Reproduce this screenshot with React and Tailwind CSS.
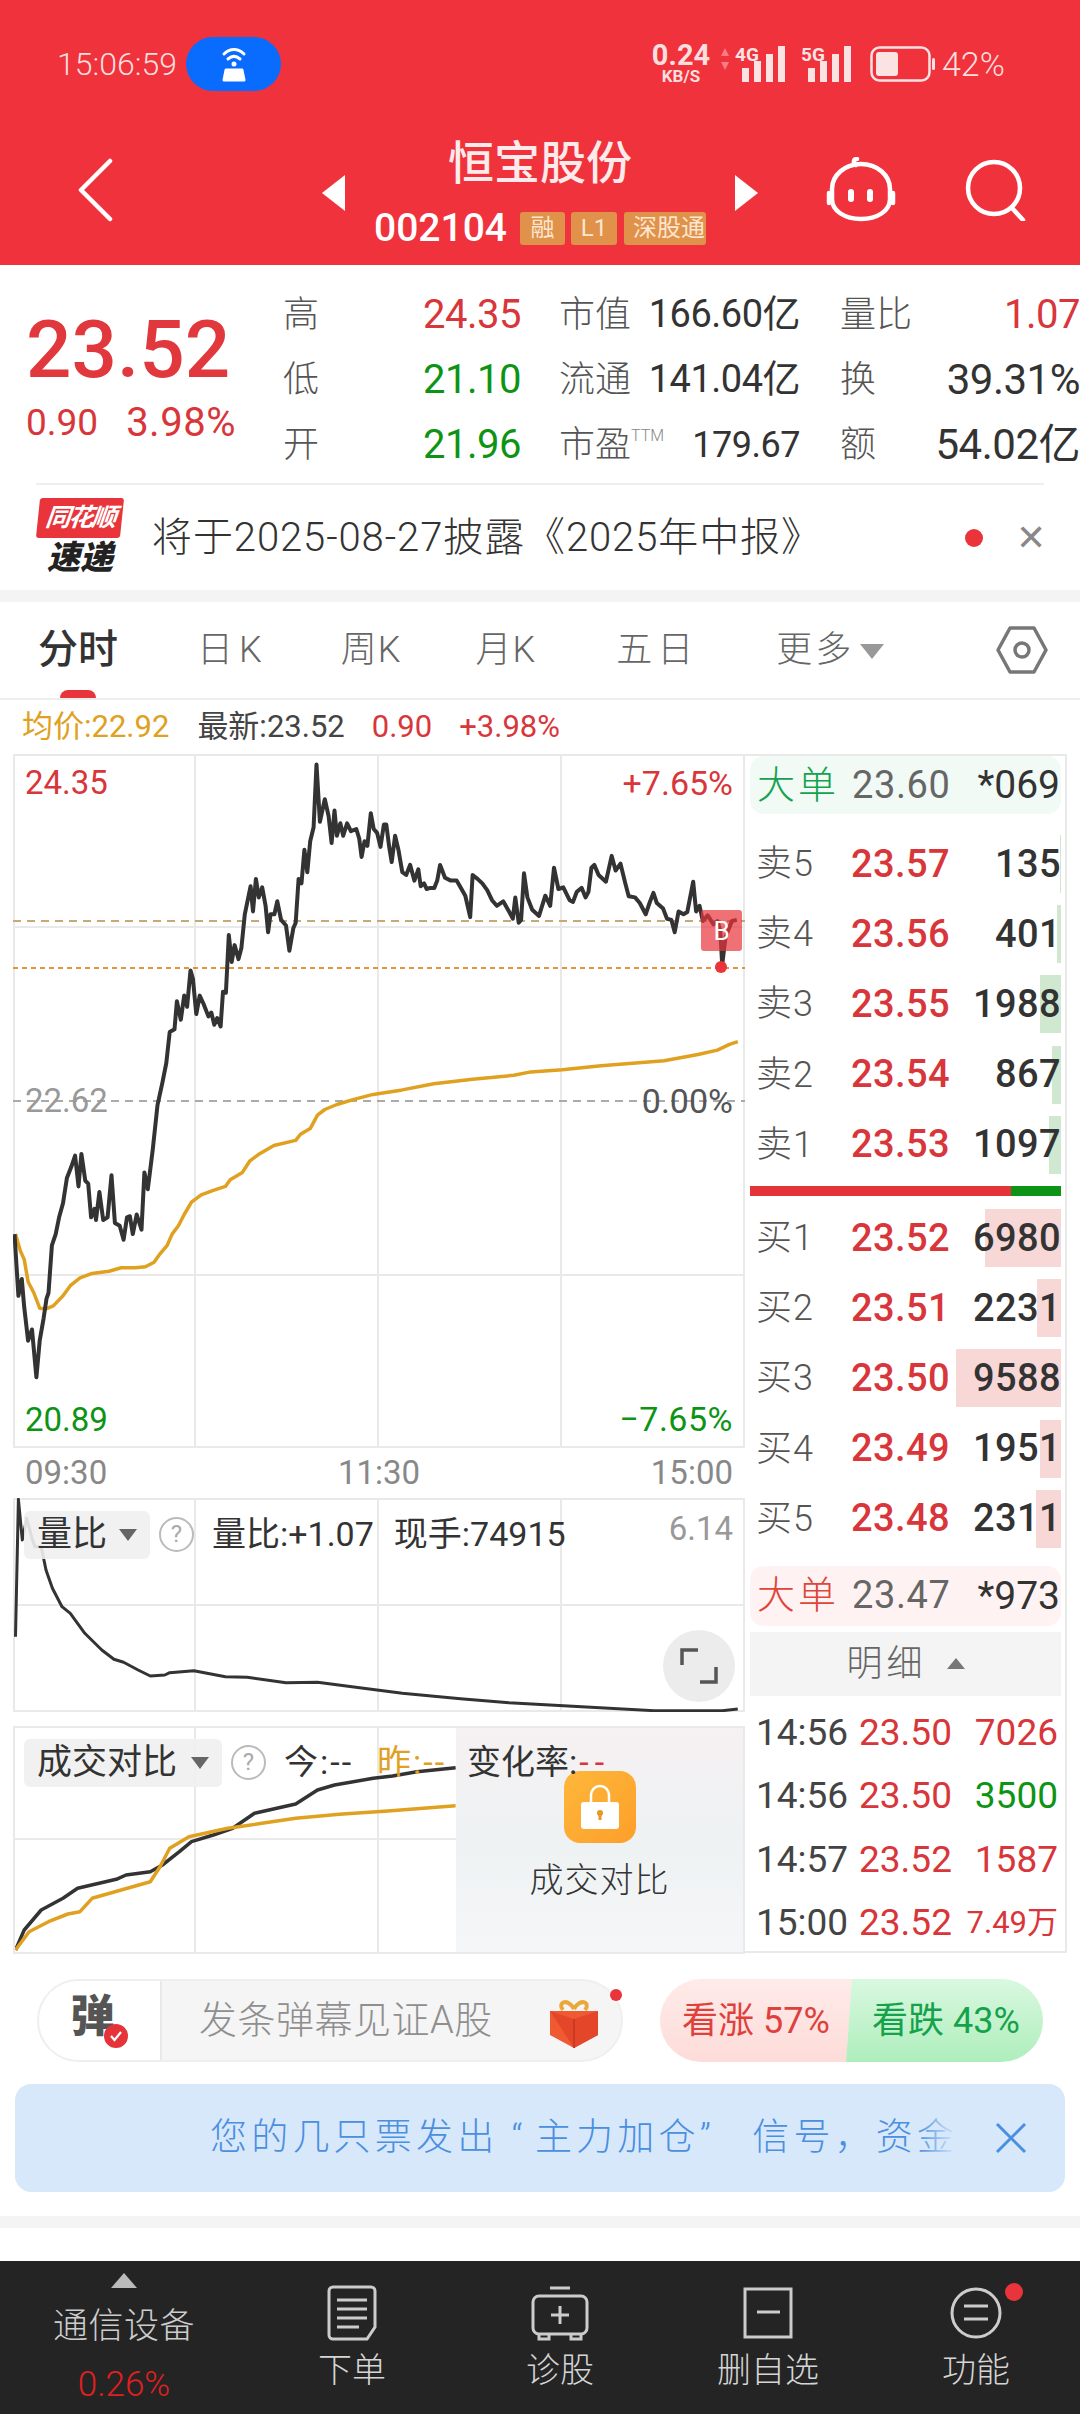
const RED = 'text-[#d8363a]';

const toPath = (pts, sx, sy, ox, oy) =>
  pts.map(([x, y], i) => `${i ? 'L' : 'M'}${(x / sx - ox).toFixed(1)} ${(y / sy + oy).toFixed(1)}`).join(' ');

// traced from the reference
const PRICE = [[30,1130],[38,1240],[45,1210],[50,1260],[58,1320],[66,1300],[75,1385],[82,1320],[90,1280],[96,1245],[100,1235],[107,1150],[115,1130],[122,1100],[130,1075],[138,1030],[147,1010],[155,990],[162,1045],[168,987],[176,1035],[182,1040],[188,1100],[195,1085],[198,1105],[205,1055],[213,1105],[222,1100],[230,1025],[237,1110],[247,1115],[255,1140],[262,1100],[268,1098],[274,1130],[282,1095],[292,1122],[298,1020],[305,1050],[315,980],[325,900],[335,860],[343,825],[350,770],[360,765],[365,715],[373,748],[380,705],[386,725],[393,660],[398,675],[405,738],[412,705],[420,720],[430,742],[436,735],[442,757],[448,745],[455,760],[460,698],[466,700],[472,597],[478,645],[484,615],[492,640],[498,620],[505,560],[517,510],[522,555],[528,497],[534,530],[541,512],[548,545],[553,592],[558,560],[566,560],[572,537],[580,570],[590,580],[597,625],[605,585],[610,575],[616,497],[622,505],[628,445],[634,485],[640,430],[647,405],[653,293],[660,395],[670,355],[678,385],[684,433],[690,375],[695,420],[702,398],[708,420],[716,398],[724,412],[735,408],[741,425],[746,458],[752,430],[758,438],[765,380],[771,408],[778,415],[785,440],[792,400],[797,400],[803,440],[808,467],[815,420],[822,445],[830,485],[838,490],[846,472],[855,500],[863,480],[868,510],[875,505],[880,515],[888,513],[896,513],[902,500],[908,472],[918,495],[930,500],[942,500],[950,512],[960,527],[970,565],[975,490],[985,497],[995,505],[1005,517],[1015,535],[1025,545],[1038,537],[1050,555],[1058,568],[1063,530],[1070,575],[1075,570],[1081,487],[1088,530],[1098,552],[1112,563],[1125,527],[1135,545],[1143,477],[1152,515],[1162,512],[1175,535],[1182,538],[1190,520],[1200,513],[1208,530],[1214,520],[1220,477],[1226,472],[1235,490],[1250,502],[1262,456],[1270,482],[1280,470],[1290,505],[1297,528],[1310,530],[1320,540],[1332,560],[1340,540],[1348,522],[1355,540],[1368,550],[1376,568],[1385,570],[1392,592],[1400,555],[1410,560],[1418,556],[1430,502],[1436,555],[1443,545],[1450,572],[1460,562],[1472,578],[1480,572],[1486,590],[1490,650],[1497,600],[1510,572],[1520,570]];
const AVG = [[32,1130],[42,1160],[50,1175],[58,1215],[70,1235],[82,1262],[95,1263],[110,1258],[130,1240],[145,1222],[165,1208],[190,1200],[225,1196],[250,1190],[280,1190],[300,1188],[318,1180],[330,1165],[345,1150],[355,1130],[368,1115],[380,1095],[395,1073],[415,1060],[440,1052],[465,1045],[475,1033],[500,1020],[515,1000],[535,987],[565,972],[610,963],[620,952],[640,942],[655,918],[670,908],[695,899],[730,890],[770,881],[830,873],[895,862],[975,854],[1060,847],[1095,841],[1160,837],[1240,830],[1370,821],[1440,810],[1480,802],[1505,792],[1522,787]];
const RATIO = [[32,500],[38,88],[46,210],[55,145],[65,200],[72,230],[85,230],[95,300],[108,355],[128,410],[145,430],[175,490],[210,540],[235,568],[255,577],[285,600],[310,618],[340,615],[350,608],[400,602],[465,620],[510,622],[590,638],[655,637],[750,655],[830,670],[950,686],[1050,698],[1200,710],[1350,722],[1490,722],[1522,717]];
const TODAY = [[32,1440],[50,1380],[85,1320],[130,1285],[160,1255],[240,1228],[260,1215],[310,1205],[335,1185],[370,1145],[395,1115],[440,1095],[480,1075],[525,1030],[610,1002],[655,960],[690,945],[770,925],[810,918],[860,905],[940,893]];
const YDAY = [[32,1440],[60,1385],[100,1355],[140,1332],[165,1325],[190,1285],[250,1260],[310,1235],[330,1190],[350,1135],[390,1100],[470,1075],[540,1060],[610,1045],[700,1033],[800,1023],[940,1007]];

const SELLS = [['卖5', '23.57', '135', 1], ['卖4', '23.56', '401', 4], ['卖3', '23.55', '1988', 21], ['卖2', '23.54', '867', 9], ['卖1', '23.53', '1097', 12]];
const BUYS = [['买1', '23.52', '6980', 76], ['买2', '23.51', '2231', 24], ['买3', '23.50', '9588', 105], ['买4', '23.49', '1951', 21], ['买5', '23.48', '2311', 25]];
const TICKS = [['14:56', '23.50', '7026', RED], ['14:56', '23.50', '3500', 'text-[#0d9414]'], ['14:57', '23.52', '1587', RED], ['15:00', '23.52', '7.49万', RED]];

function Signal({ label }) {
  return (
    <div className="flex items-end h-[36px] w-[51px] relative">
      <span className="absolute left-0 top-[-1px] text-[19px] leading-[19px] font-bold text-[#fbe3e3]">{label}</span>
      <div className="ml-[7px] w-[7px] h-[14px] bg-[#fbe3e3]" />
      <div className="ml-[5px] w-[7px] h-[21px] bg-[#fbe3e3]" />
      <div className="ml-[5px] w-[7px] h-[28px] bg-[#fbe3e3]" />
      <div className="ml-[5px] w-[7px] h-[36px] bg-[#fbe3e3]" />
    </div>
  );
}

function StatusBar() {
  return (
    <div className="flex items-center h-[54px] pl-[57px] text-[#fbdede]">
      <span className="text-[32px] font-light w-[129px] whitespace-nowrap">15:06:59</span>
      <div className="w-[95px] h-[54px] rounded-full bg-[#0a6cff] flex items-center justify-center">
        <svg width="44" height="44" viewBox="0 0 44 44" fill="none" stroke="#fff" strokeWidth="3" strokeLinecap="round">
          <path d="M12 12c6-6 14-6 20 0M16 17c4-3.5 8-3.5 12 0" />
          <circle cx="22" cy="22" r="2.5" fill="#fff" stroke="none" />
          <path d="M12 38l2-10h16l2 10z" fill="#fff" stroke="#fff" strokeLinejoin="round" />
        </svg>
      </div>
      <div className="ml-[371px] w-[58px] flex flex-col items-center">
        <span className="text-[29px] leading-[23px] font-bold">0.24</span>
        <span className="text-[17px] leading-[17px] font-bold mt-[1px]">KB/S</span>
      </div>
      <svg width="10" height="26" viewBox="0 0 10 26" className="ml-[10px] mb-[10px]">
        <path d="M5 2l4 8H1zM5 24l-4-8h8z" fill="#f87d82" />
      </svg>
      <div className="ml-[5px]"><Signal label="4G" /></div>
      <div className="ml-[15px]"><Signal label="5G" /></div>
      <svg width="66" height="36" viewBox="0 0 66 36" fill="none" className="ml-[18px]">
        <rect x="1.5" y="1.5" width="58" height="33" rx="8" stroke="#fbe3e3" strokeWidth="2.5" />
        <rect x="6" y="6" width="22" height="24" rx="3" fill="#fbe3e3" />
        <rect x="62" y="12" width="3" height="12" rx="1.5" fill="#fbe3e3" />
      </svg>
      <span className="ml-[6px] text-[34px] font-light">42%</span>
    </div>
  );
}

function Header() {
  return (
    <div className="h-[265px] shrink-0 bg-[#f0323c] pt-[37px] text-white">
      <StatusBar />
      <div className="flex items-center mt-[47px] pl-[77px]">
        <svg width="36" height="64" viewBox="0 0 36 64" fill="none" stroke="#fff" strokeWidth="4.5" strokeLinecap="round" strokeLinejoin="round" className="mt-[-6px]">
          <path d="M33 3L4 32l29 29" />
        </svg>
        <div className="ml-[209px] w-[436px] flex items-center justify-between">
          <div className="w-0 h-0 border-y-[18px] border-y-transparent border-r-[23px] border-r-white" />
          <div className="flex flex-col items-center">
            <div className="text-[46px] leading-[50px] font-medium text-[#fdeaea]">恒宝股份</div>
            <div className="flex items-center mt-[20px] h-[40px]">
              <span className="text-[39px] font-medium mr-[13px]">002104</span>
              <span className="w-[45px] h-[33px] bg-[#e0914a] rounded-[3px] text-[#fbe6cf] text-[24px] leading-[33px] text-center">融</span>
              <span className="ml-[6px] w-[46px] h-[33px] bg-[#e0914a] rounded-[3px] text-[#fbe6cf] text-[24px] leading-[33px] text-center">L1</span>
              <span className="ml-[7px] w-[82px] h-[33px] bg-[#e0914a] rounded-[3px] text-[#fbe6cf] text-[24px] leading-[33px] pl-[9px] overflow-hidden whitespace-nowrap">深股通</span>
            </div>
          </div>
          <div className="w-0 h-0 border-y-[18px] border-y-transparent border-l-[23px] border-l-white" />
        </div>
        <svg width="70" height="66" viewBox="0 0 70 66" fill="none" stroke="#fff" strokeWidth="4.5" className="ml-[68px] mt-[-6px]">
          <path d="M30 8c-3-1-3-6 1-6M6 32a29 25 0 0 1 58 0v10c0 12-13 20-29 20S6 54 6 42z" strokeLinecap="round" />
          <path d="M3 36v10M67 36v10" strokeLinecap="round" />
          <rect x="22" y="32" width="6" height="13" rx="3" fill="#fff" stroke="none" />
          <rect x="41" y="32" width="6" height="13" rx="3" fill="#fff" stroke="none" />
        </svg>
        <svg width="62" height="62" viewBox="0 0 62 62" fill="none" stroke="#fff" strokeWidth="4.5" strokeLinecap="round" className="ml-[69px] mt-[-6px]">
          <circle cx="29" cy="29" r="26" />
          <path d="M47 49l11 12" />
        </svg>
      </div>
    </div>
  );
}

function Stat({ label, value, tone = 'text-[#333]', size = 'text-[38px]' }) {
  return (
    <div className="flex items-center justify-between h-[65px]">
      <span className="text-[36px] font-light text-[#555] whitespace-nowrap">{label}</span>
      <span className={`tracking-[-0.5px] whitespace-nowrap ${size} ${tone}`}>{value}</span>
    </div>
  );
}

function Quote() {
  const green = 'text-[#0d9414]';
  return (
    <div className="h-[218px] shrink-0 flex pt-[17px] overflow-hidden">
      <div className="w-[283px] shrink-0 pl-[26px]">
        <div className="text-[80px] leading-[92px] font-medium text-[#e0383c] mt-[22px]">23.52</div>
        <div className="flex text-[37px] leading-[44px] text-[#d8363a] mt-[5px] whitespace-nowrap">
          <span>0.90</span>
          <span className="ml-[28px] text-[40px] tracking-[0.5px]">3.98%</span>
        </div>
      </div>
      <div className="w-[238px] shrink-0">
        <Stat label="高" value="24.35" tone={RED} size="text-[40px]" />
        <Stat label="低" value="21.10" tone={green} size="text-[40px]" />
        <Stat label="开" value="21.96" tone={green} size="text-[40px]" />
      </div>
      <div className="w-[241px] shrink-0 ml-[38px]">
        <Stat label="市值" value="166.60亿" />
        <Stat label="流通" value="141.04亿" />
        <div className="flex items-center justify-between h-[65px]">
          <span className="text-[36px] font-light text-[#555] flex items-start whitespace-nowrap">市盈<span className="text-[16px] leading-[26px] mt-[5px] text-[#888]">TTM</span></span>
          <span className="text-[36px] tracking-[-0.5px] text-[#333]">179.67</span>
        </div>
      </div>
      <div className="w-[240px] shrink-0 ml-[40px]">
        <Stat label="量比" value="1.07" tone={RED} size="text-[40px]" />
        <Stat label="换" value="39.31%" size="text-[42px]" />
        <Stat label="额" value="54.02亿" size="text-[42px]" />
      </div>
    </div>
  );
}

function Notice() {
  return (
    <div className="h-[107px] shrink-0 mx-[36px] border-t-2 border-[#eeeeee] flex items-center">
      <div className="w-[84px] shrink-0 ml-[2px] flex flex-col items-center mt-[-2px]">
        <div className="w-[84px] h-[40px] bg-[#e8343a] rounded-[3px] skew-x-[-6deg] flex items-center justify-center text-white text-[25px] italic font-bold tracking-[-2px]">同花顺</div>
        <div className="text-[33px] leading-[36px] italic font-black text-[#222] mt-[2px]">速递</div>
      </div>
      <span className="ml-[30px] text-[40px] font-light text-[#333] tracking-[0.9px] whitespace-nowrap">将于2025-08-27披露《2025年中报》</span>
      <div className="ml-auto w-[18px] h-[18px] rounded-full bg-[#e8343a] mr-[33px]" />
      <span className="text-[36px] leading-none text-[#888] font-light mr-[-2px]">✕</span>
    </div>
  );
}

function Tabs() {
  return (
    <div className="h-[98px] shrink-0 border-b-2 border-[#eeeeee] relative flex items-center pl-[38px] text-[36px] text-[#666] font-light whitespace-nowrap">
      <span className="text-[40px] font-medium text-[#333]">分时</span>
      <span className="ml-[79px] tracking-[6px]">日K</span>
      <span className="ml-[73px] tracking-[1px]">周K</span>
      <span className="ml-[74px] tracking-[1px]">月K</span>
      <span className="ml-[80px] tracking-[5px]">五日</span>
      <span className="ml-[78px] tracking-[3px]">更多</span>
      <div className="ml-[6px] mt-[2px] w-0 h-0 border-x-[12px] border-x-transparent border-t-[15px] border-t-[#999]" />
      <svg width="52" height="50" viewBox="0 0 52 50" fill="none" stroke="#777" strokeWidth="3.5" strokeLinejoin="round" className="ml-auto mr-[32px]">
        <path d="M14 3h24l12 22-12 22H14L2 25z" />
        <circle cx="26" cy="25" r="7" />
      </svg>
      <div className="absolute left-[60px] bottom-0 w-[36px] h-[8px] rounded-t-full bg-[#e8343a]" />
    </div>
  );
}

function MainChart() {
  const map = (pts) => toPath(pts, 2.063, 1.782, 13, -154);
  return (
    <div className="relative h-[694px] border-2 border-[#e9e9e9] text-[33px] leading-none">
      <svg width="732" height="694" viewBox="0 0 732 694" fill="none" className="absolute left-[-2px] top-[-2px]">
        <path d="M182 0v694M365 0v694M548 0v694M0 173h732M0 521h732" stroke="#e9e9e9" strokeWidth="2" />
        <path d="M0 347h732" stroke="#aaa" strokeWidth="2" strokeDasharray="8 6" />
        <path d="M0 167h732" stroke="#c9a878" strokeWidth="2" strokeDasharray="8 6" />
        <path d="M0 214h732" stroke="#e0953c" strokeWidth="2" strokeDasharray="5 4" />
        <path d={map(AVG)} stroke="#e0a020" strokeWidth="3.5" strokeLinejoin="round" />
        <path d={map(PRICE)} stroke="#333" strokeWidth="4" strokeLinejoin="round" />
      </svg>
      <div className="absolute left-[10px] top-[10px] text-[#d8363a]">24.35</div>
      <div className="absolute right-[10px] top-[10px] text-[34px] text-[#d8363a]">+7.65%</div>
      <div className="absolute left-[10px] top-[328px] text-[#999]">22.62</div>
      <div className="absolute right-[10px] top-[328px] text-[34px] text-[#555]">0.00%</div>
      <div className="absolute left-[10px] bottom-[10px] text-[#0d9414]">20.89</div>
      <div className="absolute right-[10px] bottom-[10px] text-[34px] tracking-[0.5px] text-[#0d9414]">−7.65%</div>
      <div className="absolute left-[686px] top-[154px] w-[41px] h-[41px] bg-[#e8343a]/70 rounded-[3px] flex items-center justify-center text-[26px] text-white">B</div>
      <div className="absolute left-[700px] top-[205px] w-[12px] h-[12px] rounded-full bg-[#e8343a]" />
    </div>
  );
}

function Help() {
  return (
    <span className="ml-[9px] w-[35px] h-[35px] rounded-full border-2 border-[#bbb] text-[#aaa] text-[24px] leading-[31px] text-center shrink-0">?</span>
  );
}

function Picker({ label, className }) {
  return (
    <div className={`h-[48px] rounded-[6px] bg-[#efefef]/90 flex items-center justify-between pl-[13px] pr-[13px] shrink-0 ${className}`}>
      <span className="text-[35px] leading-[48px] text-[#333]">{label}</span>
      <div className="w-0 h-0 border-x-[9px] border-x-transparent border-t-[12px] border-t-[#666]" />
    </div>
  );
}

function RatioChart() {
  const map = (pts) => toPath(pts, 2.063, 3, 13, -28);
  return (
    <div className="relative h-[214px] border-2 border-[#e9e9e9]">
      <svg width="732" height="214" viewBox="0 0 732 214" fill="none" className="absolute left-[-2px] top-[-2px]">
        <path d="M182 0v214M365 0v214M548 0v214M0 107h732" stroke="#e9e9e9" strokeWidth="2" />
        <path d={map(RATIO)} stroke="#333" strokeWidth="3" strokeLinejoin="round" />
      </svg>
      <div className="absolute left-[9px] top-[9px] flex items-center whitespace-nowrap">
        <Picker label="量比" className="w-[126px]" />
        <Help />
        <span className="ml-[18px] text-[34px] text-[#333]">量比:+1.07</span>
        <span className="ml-[20px] text-[34px] text-[#333]">现手:74915</span>
      </div>
      <span className="absolute right-[10px] top-[11px] text-[33px] leading-[36px] text-[#999]">6.14</span>
      <div className="absolute left-[648px] top-[130px] w-[72px] h-[72px] rounded-full bg-[#ececec] flex items-center justify-center">
        <svg width="38" height="38" viewBox="0 0 38 38" fill="none" stroke="#555" strokeWidth="3.5">
          <path d="M2 18V3h16M36 20v15H20" />
        </svg>
      </div>
    </div>
  );
}

function CompareChart() {
  const map = (pts) => toPath(pts, 2.063, 3, 13, -256);
  return (
    <div className="relative h-[228px] mt-[14px] border-2 border-[#e9e9e9] overflow-hidden">
      <svg width="732" height="228" viewBox="0 0 732 228" fill="none" className="absolute left-[-2px] top-[-2px]">
        <path d="M182 0v228M365 0v228M548 0v228M0 113h732" stroke="#e9e9e9" strokeWidth="2" />
        <path d={map(TODAY)} stroke="#333" strokeWidth="3.5" strokeLinejoin="round" />
        <path d={map(YDAY)} stroke="#e0a020" strokeWidth="3.5" strokeLinejoin="round" />
      </svg>
      <div className="absolute left-[441px] right-0 top-0 bottom-0 bg-gradient-to-b from-[#f6f1f3] via-[#eef2f3] to-[#f5f6f8] flex flex-col items-center">
        <div className="mt-[43px] w-[72px] h-[72px] rounded-[16px] bg-gradient-to-br from-[#fdb73a] to-[#fd9f2a] flex items-center justify-center">
          <svg width="40" height="46" viewBox="0 0 40 46" fill="none">
            <path d="M11 20V11a9 9 0 0 1 18 0v9" stroke="#fff" strokeWidth="2.5" />
            <rect x="1" y="18" width="38" height="27" rx="3" fill="#fff" />
            <circle cx="20" cy="29" r="3" fill="#e8962a" />
            <rect x="18.5" y="29" width="3" height="7" fill="#e8962a" />
          </svg>
        </div>
        <span className="mt-[17px] text-[34px] leading-[40px] text-[#333] tracking-[1px] font-light">成交对比</span>
      </div>
      <div className="absolute left-[9px] top-[9px] flex items-center whitespace-nowrap text-[34px]">
        <Picker label="成交对比" className="w-[198px]" />
        <Help />
        <span className="ml-[18px] w-[93px] text-[#333] tracking-[2px]">今:--</span>
        <span className="w-[90px] text-[#e0a020] tracking-[2px]">昨:--</span>
        <span className="text-[#333]">变化率:</span>
        <span className="ml-[2px] text-[#d8363a] tracking-[6px]">--</span>
      </div>
    </div>
  );
}

function BookRow({ row, barColor }) {
  const [label, price, qty, bar] = row;
  return (
    <div className="relative h-[70.2px] flex items-center text-[38px] whitespace-nowrap">
      <div className={`absolute right-0 top-[6px] h-[58px] ${barColor}`} style={{ width: bar }} />
      <span className="relative pl-[6px] w-[101px] text-[36px] font-light text-[#555] tracking-[1px]">{label}</span>
      <span className={`relative font-medium tracking-[0.4px] ${RED}`}>{price}</span>
      <span className="relative ml-auto font-medium tracking-[0.4px] text-[#333]">{qty}</span>
    </div>
  );
}

function OrderBook() {
  return (
    <div className="w-[322px] shrink-0 h-[1199px] pl-[5px] pr-[4px] border-r-2 border-b-2 border-t-2 border-[#e9e9e9]">
      <div className="h-[58px] rounded-[14px] bg-[#f1faf4] flex items-center pl-[7px] pr-[1px] text-[38px] whitespace-nowrap">
        <span className="w-[95px] text-[#14a24e] font-light tracking-[3px]">大单</span>
        <span className="text-[#666] tracking-[0.6px]">23.60</span>
        <span className="ml-auto text-[39px] text-[#333]">*069</span>
      </div>
      <div className="mt-[15px]">
        {SELLS.map((r) => <BookRow key={r[0]} row={r} barColor="bg-[#cfe8cf]" />)}
      </div>
      <div className="flex h-[10px] mt-[6px]">
        <div className="w-[261px] bg-[#e4343a]" />
        <div className="flex-1 bg-[#0d9414]" />
      </div>
      <div className="mt-[7px]">
        {BUYS.map((r) => <BookRow key={r[0]} row={r} barColor="bg-[#f8d7d7]" />)}
      </div>
      <div className="mt-[12px] h-[60px] rounded-[14px] bg-[#fef3f2] flex items-center pl-[7px] pr-[1px] text-[38px] whitespace-nowrap">
        <span className="w-[95px] text-[#e0443a] font-light tracking-[3px]">大单</span>
        <span className="text-[#666] tracking-[0.6px]">23.47</span>
        <span className="ml-auto text-[39px] text-[#333]">*973</span>
      </div>
      <div className="mt-[6px] h-[64px] bg-[#f4f4f4] flex items-center justify-center text-[36px] font-light text-[#666]">
        <span className="tracking-[4px]">明细</span>
        <div className="ml-[20px] w-0 h-0 border-x-[9px] border-x-transparent border-b-[11px] border-b-[#777]" />
      </div>
      <div className="mt-[5px]">
        {TICKS.map(([t, p, q, tone], i) => (
          <div key={i} className="h-[63.5px] flex items-center text-[37px] whitespace-nowrap">
            <span className="pl-[6px] w-[109px] text-[#444]">{t}</span>
            <span className="text-[#d8363a]">{p}</span>
            <span className={`ml-auto pr-[3px] ${q.includes('万') ? 'text-[31px]' : ''} ${tone}`}>{q}</span>
          </div>
        ))}
      </div>
    </div>
  );
}

function Gift() {
  return (
    <svg width="50" height="52" viewBox="0 0 50 52" fill="none">
      <path d="M25 12C18 0 8 6 14 13M25 12C32 0 42 6 36 13" stroke="#e8a93a" strokeWidth="4" />
      <path d="M1 14h48v24L25 51 1 38z" fill="#ef5a33" />
      <path d="M1 14l24 8 24-8v24L25 51z" fill="#e4462a" />
      <path d="M25 22v29" stroke="#c93a22" strokeWidth="2" />
    </svg>
  );
}

function Danmaku() {
  return (
    <div className="flex mt-[25px] ml-[37px] shrink-0">
      <div className="relative w-[586px] h-[83px] rounded-full border-2 border-[#efefef] bg-[#f5f5f5] flex overflow-visible">
        <div className="w-[123px] h-full rounded-l-full bg-white border-r-2 border-[#e9e9e9] relative flex items-center justify-center">
          <span className="text-[44px] font-black text-[#555] mr-[14px] mt-[-8px]">弹</span>
          <div className="absolute left-[65px] top-[43px] w-[24px] h-[24px] rounded-full bg-[#e4343a] flex items-center justify-center">
            <svg width="14" height="14" viewBox="0 0 14 14" fill="none" stroke="#fff" strokeWidth="2.2"><path d="M2 7l3.5 4L12 3" /></svg>
          </div>
        </div>
        <span className="ml-[37px] self-center text-[38px] font-light text-[#8f8f8f] tracking-[0.5px] whitespace-nowrap">发条弹幕见证A股</span>
        <div className="ml-auto self-center mr-[22px] mt-[4px]"><Gift /></div>
        <div className="absolute right-[-1px] top-[8px] w-[12px] h-[12px] rounded-full bg-[#e8343a]" />
      </div>
      <div className="ml-[37px] w-[383px] h-[83px] flex rounded-full overflow-hidden text-[36px] whitespace-nowrap">
        <div className="w-[193px] bg-gradient-to-b from-[#feebe9] to-[#fddcd9] [clip-path:polygon(0_0,100%_0,97%_100%,0_100%)] text-[#e0403c] flex items-center pl-[22px]">看涨 57%</div>
        <div className="w-[198px] ml-[-6px] bg-gradient-to-b from-[#d9f8e0] to-[#aeeebc] [clip-path:polygon(3%_0,100%_0,100%_100%,0_100%)] text-[#15a24a] flex items-center pl-[26px]">看跌 43%</div>
      </div>
    </div>
  );
}

function Banner() {
  return (
    <div className="mt-[22px] mx-[15px] h-[108px] shrink-0 rounded-[16px] bg-[#d8e8fb] flex items-center text-[#4a8fe0]">
      <div className="relative ml-[195px] w-[747px] overflow-hidden whitespace-pre text-[37px] tracking-[4.2px] font-light">
        您的几只票发出 “<span className="ml-[8px]">主力加仓</span><span className="mr-[24px]">” </span>信号，资金
        <div className="absolute right-0 top-0 bottom-0 w-[40px] bg-gradient-to-r from-transparent to-[#d8e8fb]" />
      </div>
      <svg width="32" height="32" viewBox="0 0 32 32" fill="none" stroke="#4a8fe0" strokeWidth="3" className="ml-[38px]">
        <path d="M2 2l28 28M30 2L2 30" />
      </svg>
    </div>
  );
}

function NavItem({ label, children, className }) {
  return (
    <div className={`w-[208px] flex flex-col items-center ${className}`}>
      <div className="h-[60px] flex items-center justify-center">{children}</div>
      <span className="mt-[7px] text-[34px] leading-[40px] font-light text-[#d5d5d5] whitespace-nowrap">{label}</span>
    </div>
  );
}

function BottomNav() {
  return (
    <div className="mt-auto h-[153px] shrink-0 bg-[#242424] flex pt-[22px]">
      <div className="w-[248px] shrink-0 flex flex-col items-center text-center">
        <div className="mt-[-10px] w-0 h-0 border-x-[13px] border-x-transparent border-b-[15px] border-b-[#bbb]" />
        <span className="mt-[17px] text-[35px] leading-[44px] font-light tracking-[0.5px] text-[#ccc]">通信设备</span>
        <span className="mt-[16px] text-[35px] leading-[40px] font-light text-[#e02020]">0.26%</span>
      </div>
      <div className="flex">
        <NavItem label="下单">
          <svg width="50" height="56" viewBox="0 0 50 56" fill="none" stroke="#ccc" strokeWidth="3">
            <path d="M6 2h38a4 4 0 0 1 4 4v36l-8 12H6a4 4 0 0 1-4-4V6a4 4 0 0 1 4-4z" />
            <path d="M10 15h30M10 24h30M10 33h30M10 42h22" />
          </svg>
        </NavItem>
        <NavItem label="诊股">
          <svg width="58" height="56" viewBox="0 0 58 56" fill="none" stroke="#ccc" strokeWidth="3">
            <path d="M19 3h20" />
            <rect x="2" y="11" width="54" height="38" rx="6" />
            <path d="M29 21v18M20 30h18M8 50v4h10v-4M40 50v4h10v-4" />
          </svg>
        </NavItem>
        <NavItem label="删自选">
          <svg width="50" height="52" viewBox="0 0 50 52" fill="none" stroke="#ccc" strokeWidth="3">
            <rect x="2" y="2" width="46" height="48" />
            <path d="M14 25h23" />
          </svg>
        </NavItem>
        <NavItem label="功能" className="relative">
          <svg width="52" height="54" viewBox="0 0 52 54" fill="none" stroke="#ccc" strokeWidth="3">
            <circle cx="26" cy="27" r="24" />
            <path d="M14 20h24M14 33h24" />
          </svg>
          <div className="absolute left-[133px] top-[0px] w-[18px] h-[18px] rounded-full bg-[#e8343a]" />
        </NavItem>
      </div>
    </div>
  );
}

export default function App() {
  return (
    <div className="w-[1080px] h-[2414px] overflow-hidden bg-white flex flex-col font-[Roboto,'Noto_Sans_CJK_SC',sans-serif]">
      <Header />
      <Quote />
      <Notice />
      <div className="h-[12px] shrink-0 bg-[#f4f4f4]" />
      <Tabs />
      <div className="h-[54px] shrink-0 flex items-center pl-[22px] text-[31px] whitespace-nowrap">
        <span className="text-[#e0a020]">均价:22.92</span>
        <span className="ml-[28px] text-[#444]">最新:23.52</span>
        <span className={`ml-[27px] ${RED}`}>0.90</span>
        <span className={`ml-[27px] ${RED}`}>+3.98%</span>
      </div>
      <div className="flex pl-[13px] shrink-0">
        <div className="w-[732px] shrink-0">
          <MainChart />
          <div className="h-[50px] flex items-center justify-between px-[12px] text-[33px] text-[#888]">
            <span>09:30</span>
            <span>11:30</span>
            <span>15:00</span>
          </div>
          <RatioChart />
          <CompareChart />
        </div>
        <OrderBook />
      </div>
      <Danmaku />
      <Banner />
      <div className="mt-[24px] h-[12px] shrink-0 bg-[#f4f4f4]" />
      <BottomNav />
    </div>
  );
}
